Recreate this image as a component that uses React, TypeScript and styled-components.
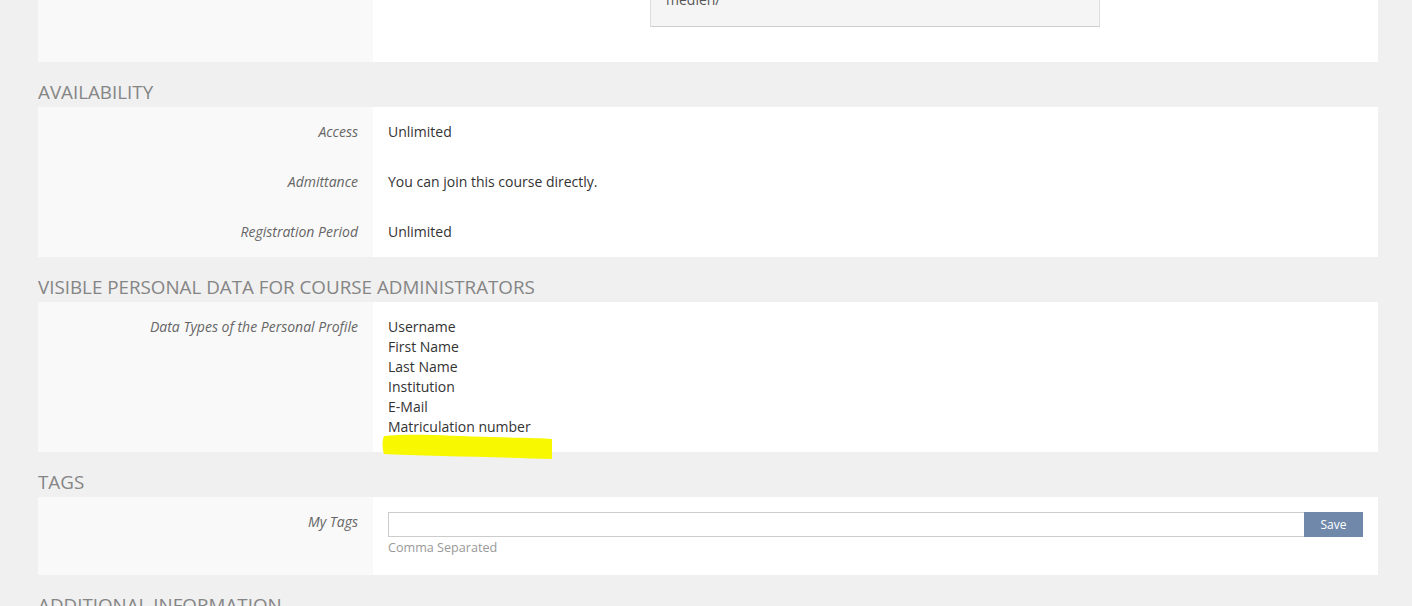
import React from 'react';
import styled, { createGlobalStyle } from 'styled-components';

const GlobalStyle = createGlobalStyle`
	html, body {
		margin: 0;
		padding: 0;
		background: #f0f0f0;
		font-family: 'Open Sans', 'Liberation Sans', sans-serif;
		font-size: 14px;
		line-height: 20px;
		color: #333;
		overflow: hidden;
	}
	* { box-sizing: border-box; }
`;

const Page = styled.div`
	width: 1340px;
	margin: 0 38px;
	height: 606px;
	overflow: hidden;
`;

const SectionTitle = styled.h3`
	margin: 0;
	padding: 20px 0 5px;
	font-size: 18.8px;
	font-weight: 400;
	line-height: 20px;
	color: #858585;
	text-transform: uppercase;
	white-space: nowrap;
`;

const Panel = styled.div`
	display: flex;
	flex-direction: column;
	background: #fff;
`;

const Row = styled.div`
	display: grid;
	grid-template-columns: 335px 1fr;
`;

const Label = styled.div`
	background: #f9f9f9;
	padding: 15px;
	text-align: right;
	font-style: italic;
	color: #666;
`;

const Value = styled.div<{ $top?: number; $bottom?: number }>`
	position: relative;
	padding: ${(p) => p.$top ?? 15}px 15px ${(p) => p.$bottom ?? 15}px;
	color: #333;
`;

const PathBox = styled.div`
	margin: -10px 0 0 262px;
	width: 450px;
	padding: 0 15px 16px;
	background: #f5f5f5;
	border: 1px solid #ddd;
	border-top: none;
	border-bottom-color: #ccc;
	color: #555;
`;

const TopFill = styled.div`
	height: 35px;
`;

const List = styled.ul`
	list-style: none;
	margin: 0;
	padding: 0;
`;

const TagForm = styled.div`
	display: flex;
`;

const TagInput = styled.input`
	flex: 1;
	height: 25px;
	border: 1px solid #ccc;
	border-right: none;
	padding: 2px 6px;
	font: inherit;
	outline: none;
`;

const SaveButton = styled.button`
	width: 59px;
	height: 25px;
	border: none;
	background: #7089ab;
	color: #fff;
	font-family: inherit;
	font-size: 12px;
	padding: 0;
	cursor: pointer;
`;

const Hint = styled.div`
	margin-top: 1px;
	font-size: 12.6px;
	color: #999;
`;

const Marker = styled.svg`
	position: absolute;
	left: 9px;
	bottom: -8px;
	pointer-events: none;
`;

const profileFields = ['Username', 'First Name', 'Last Name', 'Institution', 'E-Mail', 'Matriculation number'];

const availability = [
	{ label: 'Access', value: 'Unlimited' },
	{ label: 'Admittance', value: 'You can join this course directly.' },
	{ label: 'Registration Period', value: 'Unlimited' },
];

export default function App() {
	return (
		<>
			<GlobalStyle />
			<Page>
				<Panel>
					<Row>
						<Label />
						<Value $top={0} $bottom={0}>
							<PathBox>medien/</PathBox>
							<TopFill />
						</Value>
					</Row>
				</Panel>

				<SectionTitle>Availability</SectionTitle>
				<Panel>
					{availability.map((r) => (
						<Row key={r.label}>
							<Label>{r.label}</Label>
							<Value>{r.value}</Value>
						</Row>
					))}
				</Panel>

				<SectionTitle>Visible Personal Data for Course Administrators</SectionTitle>
				<Panel>
					<Row>
						<Label>Data Types of the Personal Profile</Label>
						<Value>
							<List>
								{profileFields.map((f) => (
									<li key={f}>{f}</li>
								))}
							</List>
							<Marker width="172" height="30" viewBox="0 0 172 30">
								<path
									d="M2 6 C 30 3, 70 6, 110 7 C 140 8, 160 8, 170 9 L 170 29 C 140 28, 100 27, 60 26 C 35 25, 15 25, 2 24 C 0 18, 0 11, 2 6 Z"
									fill="#f8f800"
								/>
							</Marker>
						</Value>
					</Row>
				</Panel>

				<SectionTitle>Tags</SectionTitle>
				<Panel>
					<Row>
						<Label>My Tags</Label>
						<Value $bottom={17}>
							<TagForm>
								<TagInput type="text" />
								<SaveButton type="button">Save</SaveButton>
							</TagForm>
							<Hint>Comma Separated</Hint>
						</Value>
					</Row>
				</Panel>

				<SectionTitle>Additional Information</SectionTitle>
			</Page>
		</>
	);
}
